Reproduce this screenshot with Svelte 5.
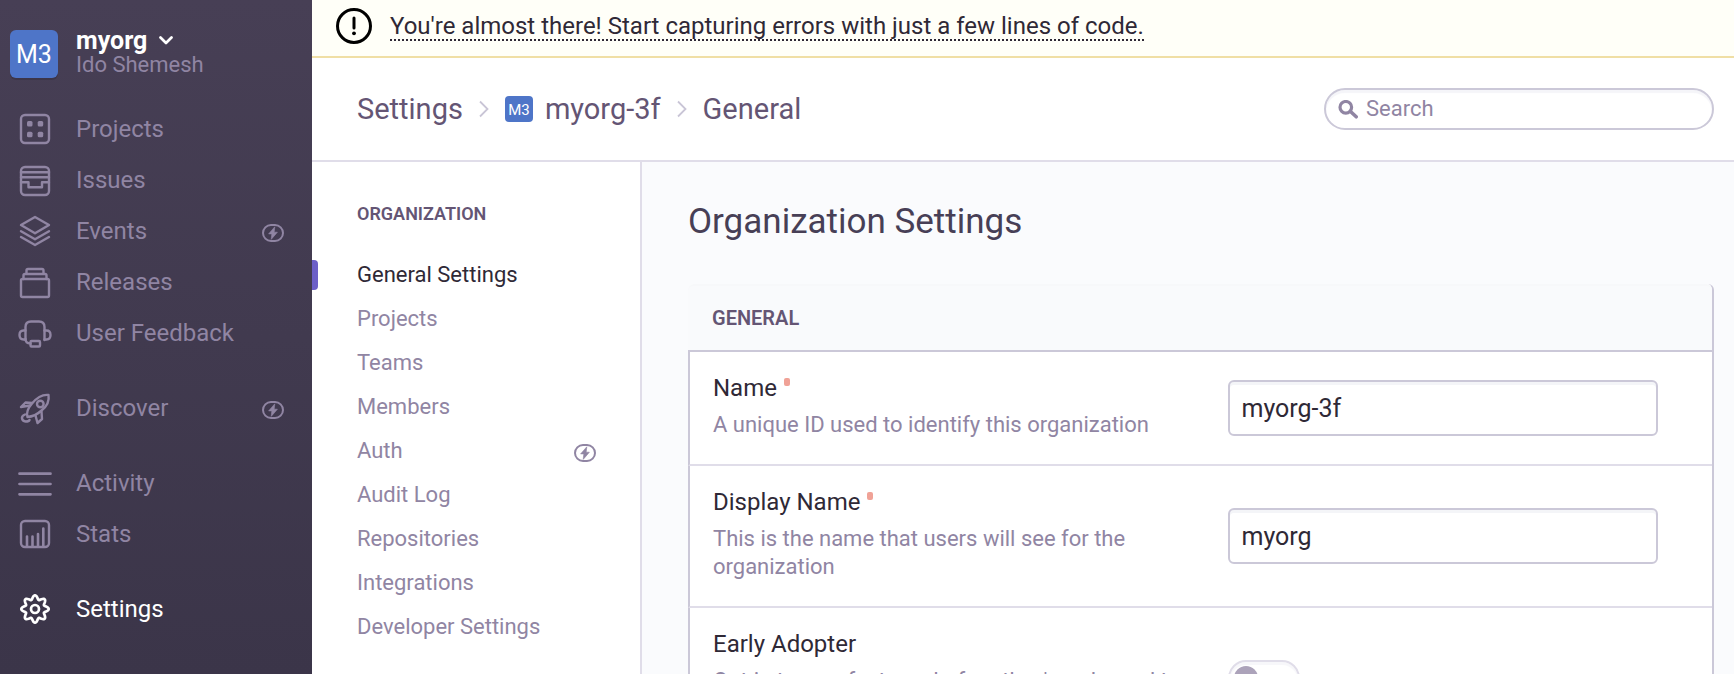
<script>
  const groups = [
    [
      { label: 'Projects', icon: 'projects' },
      { label: 'Issues', icon: 'issues' },
      { label: 'Events', icon: 'events', power: true },
      { label: 'Releases', icon: 'releases' },
      { label: 'User Feedback', icon: 'feedback' }
    ],
    [{ label: 'Discover', icon: 'discover', power: true }],
    [
      { label: 'Activity', icon: 'activity' },
      { label: 'Stats', icon: 'stats' }
    ],
    [{ label: 'Settings', icon: 'settings', active: true }]
  ];

  const links = [
    { label: 'General Settings', active: true },
    { label: 'Projects' },
    { label: 'Teams' },
    { label: 'Members' },
    { label: 'Auth', power: true },
    { label: 'Audit Log' },
    { label: 'Repositories' },
    { label: 'Integrations' },
    { label: 'Developer Settings' }
  ];

  // Outline of the eight-lobed gear, sampled around the centre of a 34px box.
  const gear =
    'M' +
    Array.from({ length: 128 }, (_, i) => {
      const a = (i / 128) * Math.PI * 2;
      const r = 11.7 + 2 * Math.cos(8 * a);
      return `${(17 + r * Math.cos(a)).toFixed(2)} ${(17 + r * Math.sin(a)).toFixed(2)}`;
    }).join('L') +
    'Z';

  let name = $state('myorg-3f');
  let displayName = $state('myorg');
  let earlyAdopter = $state(false);
</script>

{#snippet bolt()}
  <svg class="bolt" viewBox="0 0 22 18" aria-hidden="true">
    <rect x="1" y="1" width="20" height="16" rx="8" fill="none" stroke="currentColor" stroke-width="2" />
    <path d="M12.800 2.800 6.600 9.900h3.200L9.200 15.400l6.200-7.200h-3.200z" fill="currentColor" stroke="currentColor" stroke-width=".6" />
  </svg>
{/snippet}

{#snippet chevron()}
  <svg class="chevron" viewBox="0 0 10 18" aria-hidden="true">
    <path d="M1 1.500 8.500 9 1 16.500" fill="none" stroke="currentColor" stroke-width="1.800" />
  </svg>
{/snippet}

<div class="app">
  <aside class="sidebar">
    <button class="org" type="button">
      <span class="avatar">M3</span>
      <span class="who">
        <span class="org-name">
          myorg
          <svg class="caret" viewBox="0 0 14 9" aria-hidden="true">
            <path d="M1.500 1.500 7 7l5.500-5.500" fill="none" stroke="currentColor" stroke-width="2.700" stroke-linecap="round" stroke-linejoin="round" />
          </svg>
        </span>
        <span class="user">Ido Shemesh</span>
      </span>
    </button>

    <nav aria-label="Main">
      {#each groups as group}
        <ul>
          {#each group as item}
            <li>
              <a href="#{item.icon}" class="item" class:active={item.active}>
                <svg class="icon" viewBox="0 0 34 34" fill="none" stroke="currentColor" stroke-width="2.400" stroke-linejoin="round" stroke-linecap="round" aria-hidden="true">
                  {#if item.icon === 'projects'}
                    <rect x="3" y="3" width="28" height="28" rx="4" />
                    <g fill="currentColor" stroke="none">
                      <rect x="9" y="9" width="5.500" height="5.500" rx="1.500" />
                      <rect x="19.700" y="9" width="5.500" height="5.500" rx="1.500" />
                      <rect x="9" y="19.700" width="5.500" height="5.500" rx="1.500" />
                      <rect x="19.700" y="19.700" width="5.500" height="5.500" rx="1.500" />
                    </g>
                  {:else if item.icon === 'issues'}
                    <rect x="3" y="4" width="28" height="28" rx="4" />
                    <path d="M3 9.300h28M3 14.300h28M3 19.300h7.500v5h13.500v-5H31" />
                  {:else if item.icon === 'events'}
                    <path d="M17 3 31 11 17 19.300 3 11Z" />
                    <path d="M3 17.200 17 25.200l14-8M3 23 17 31l14-8" />
                  {:else if item.icon === 'releases'}
                    <rect x="3" y="14" width="28" height="18" rx="1.500" />
                    <path d="M5.500 14v-3.500q0-1.500 1.500-1.500h20q1.500 0 1.500 1.500V14M8.500 9V5.500Q8.500 4 10 4h14q1.500 0 1.500 1.500V9" />
                  {:else if item.icon === 'feedback'}
                    <path d="M7.500 24V11q0-5.500 5.500-5.500h8q5.500 0 5.500 5.500v13" />
                    <path d="M7.500 14.500H5.500q-4 0-4 4.500t4 4.500h2M26.500 14.500h2q4 0 4 4.500t-4 4.500h-2M7.500 23q0 4.500 5 4.500" />
                    <rect x="12.500" y="25" width="9.500" height="5.500" rx="1" />
                  {:else if item.icon === 'discover'}
                    <path d="M9.500 26Q7.500 20 14 12.500 22 3 30.500 4q1.500 9-7 15.500Q17 25.500 9.500 26Z" />
                    <circle cx="22.300" cy="13" r="3.300" />
                    <path d="M12 14.500 3 16l4.500-4.500 6.500.5M17.500 24.500 19.500 32l4.500-4-.5-7.500M7 23.500q-3.500 1.500-3 4t3.500 3q3.500 0 4-1.500" />
                  {:else if item.icon === 'activity'}
                    <path d="M1.500 7.700h31M1.500 18h31M1.500 28.300h31" stroke-width="2.700" />
                  {:else if item.icon === 'stats'}
                    <rect x="3" y="4" width="28" height="26" rx="4" />
                    <path d="M9 29V19.500M14.500 29V19.500M20 29V17M25.300 29V11.500" stroke-width="2.600" />
                  {:else}
                    <path d={gear} stroke-width="2.700" />
                    <circle cx="17" cy="17" r="4" stroke-width="2.700" />
                  {/if}
                </svg>
                <span class="label">{item.label}</span>
                {#if item.power}{@render bolt()}{/if}
              </a>
            </li>
          {/each}
        </ul>
      {/each}
    </nav>
  </aside>

  <div class="page">
    <div class="banner">
      <svg class="alert" viewBox="0 0 36 36" aria-hidden="true">
        <circle cx="18" cy="18" r="16.500" fill="none" stroke="#000" stroke-width="3" />
        <path d="M18 10v10" stroke="#000" stroke-width="3" stroke-linecap="round" />
        <circle cx="18" cy="25.300" r="1.900" />
      </svg>
      <a href="#start">You're almost there! Start capturing errors with just a few lines of code.</a>
    </div>

    <header class="topbar">
      <nav class="crumbs" aria-label="Breadcrumb">
        <a href="#settings">Settings</a>
        {@render chevron()}
        <a class="crumb-org" href="#org"><span class="avatar small">M3</span>myorg-3f</a>
        {@render chevron()}
        <a href="#general">General</a>
      </nav>
      <label class="search">
        <svg viewBox="0 0 20 19" aria-hidden="true">
          <circle cx="7.800" cy="7.300" r="5.800" fill="none" stroke="currentColor" stroke-width="3.200" />
          <path d="m12.500 11.500 5.700 5.300" stroke="currentColor" stroke-width="3.600" stroke-linecap="round" />
        </svg>
        <input type="search" placeholder="Search" aria-label="Search" />
      </label>
    </header>

    <div class="body">
      <nav class="subnav" aria-labelledby="subnav-title">
        <h2 id="subnav-title">ORGANIZATION</h2>
        <ul>
          {#each links as link}
            <li class:active={link.active}>
              <a href="#{link.label}">{link.label}</a>
              {#if link.power}{@render bolt()}{/if}
            </li>
          {/each}
        </ul>
      </nav>

      <main>
        <h1>Organization Settings</h1>
        <section class="panel">
          <h2>GENERAL</h2>
          <div class="row">
            <div class="desc">
              <label for="name">Name<span class="required"></span></label>
              <p>A unique ID used to identify this organization</p>
            </div>
            <input id="name" type="text" bind:value={name} />
          </div>
          <div class="row">
            <div class="desc">
              <label for="display-name">Display Name<span class="required"></span></label>
              <p>This is the name that users will see for the organization</p>
            </div>
            <input id="display-name" type="text" bind:value={displayName} />
          </div>
          <div class="row">
            <div class="desc">
              <label for="early">Early Adopter</label>
              <p>Opt-in to new features before they're released to the public</p>
            </div>
            <input id="early" class="toggle" type="checkbox" role="switch" aria-checked={earlyAdopter} bind:checked={earlyAdopter} />
          </div>
        </section>
      </main>
    </div>
  </div>
</div>

<style>
  :global(body) {
    background: #fff;
  }

  .app,
  .app * {
    box-sizing: border-box;
  }

  .app {
    display: flex;
    height: 100vh;
    overflow: hidden;
    font-family: Roboto, 'Liberation Sans', sans-serif;
    font-size: 22px;
    line-height: 28px;
    color: #2f2936;
  }

  a {
    color: inherit;
    text-decoration: none;
  }

  ul {
    list-style: none;
    margin: 0;
    padding: 0;
  }

  h1,
  h2,
  p {
    margin: 0;
  }

  svg {
    display: block;
    flex: none;
  }

  input,
  button {
    font: inherit;
    color: inherit;
  }

  .sidebar {
    flex: 0 0 312px;
    padding: 30px 28px 0 0;
    background: linear-gradient(#473f55, #3b3549);
    color: #9085a3;
  }

  .org {
    display: flex;
    gap: 18px;
    margin: 0 0 26px;
    padding: 0 0 0 10px;
    border: 0;
    background: none;
    text-align: left;
  }

  .avatar {
    display: flex;
    align-items: center;
    justify-content: center;
    width: 48px;
    height: 48px;
    padding-top: 1px;
    border-radius: 6px;
    background: #4e75c8;
    box-shadow: 0 2px 0 rgba(0, 0, 0, 0.12);
    color: #fff;
    font-size: 25px;
  }

  .who {
    display: flex;
    flex-direction: column;
    height: 48px;
  }

  .org-name {
    display: flex;
    align-items: center;
    gap: 12px;
    height: 21px;
    color: #fff;
    font-size: 25px;
    font-weight: 700;
  }

  .caret {
    width: 14px;
    height: 9px;
  }

  .user {
    line-height: 28px;
  }

  .sidebar ul {
    margin-bottom: 24px;
  }

  .item {
    display: flex;
    align-items: center;
    gap: 24px;
    padding: 8px 0 9px 18px;
    font-size: 24px;
  }

  .label {
    flex: 1;
  }

  .item.active {
    color: #fff;
  }

  .icon {
    width: 34px;
    height: 34px;
  }

  .bolt {
    width: 22px;
    height: 18px;
    margin-top: 4px;
  }

  .page {
    flex: 1;
    min-width: 0;
    display: flex;
    flex-direction: column;
  }

  .banner {
    display: flex;
    align-items: center;
    gap: 18px;
    padding: 8px 24px 12px;
    border-bottom: 2px solid #f0dfa5;
    background: #fffff8;
  }

  .banner a {
    margin-top: 2px;
    border-bottom: 2px dotted #2f2936;
    font-size: 24px;
    line-height: 26px;
  }

  .alert {
    width: 36px;
    height: 36px;
  }

  .topbar {
    display: flex;
    align-items: center;
    justify-content: space-between;
    padding: 30px 20px 30px 45px;
    border-bottom: 2px solid #e0dde9;
    background: #fff;
  }

  .crumbs {
    display: flex;
    align-items: center;
    gap: 16px;
    color: #645574;
    font-size: 29px;
    line-height: 32px;
  }

  .chevron {
    width: 10px;
    height: 18px;
    color: #c9c5d6;
  }

  .crumb-org {
    display: flex;
    align-items: center;
    gap: 12px;
  }

  .avatar.small {
    width: 28px;
    height: 26px;
    border-radius: 4px;
    box-shadow: none;
    font-size: 15px;
  }

  .search {
    display: flex;
    align-items: center;
    gap: 8px;
    flex: 0 1 390px;
    height: 42px;
    padding: 0 12px;
    border: 2px solid #cbc8d8;
    border-radius: 21px;
    box-shadow: inset 0 3px 1px #f5f5f9;
    color: #9085a3;
  }

  .search svg {
    width: 20px;
    height: 19px;
  }

  .search input {
    flex: 1;
    min-width: 0;
    padding: 0;
    border: 0;
    outline: 0;
    background: none;
  }

  .search input::placeholder {
    color: #9085a3;
    opacity: 1;
  }

  .body {
    flex: 1;
    min-height: 0;
    display: flex;
  }

  .subnav {
    flex: 0 0 330px;
    padding-top: 38px;
    border-right: 2px solid #e0dde9;
    background: #fff;
    color: #9085a3;
  }

  h2 {
    color: #645574;
    font-size: 20px;
    font-weight: 600;
    line-height: 28px;
  }

  .subnav h2 {
    padding: 0 45px;
    margin-bottom: 24px;
    font-size: 18px;
  }

  .subnav li {
    position: relative;
    display: flex;
    align-items: center;
    justify-content: space-between;
    height: 44px;
    padding: 1px 44px 0 45px;
  }

  .subnav li.active {
    color: #2f2936;
  }

  .subnav li.active::before {
    content: '';
    position: absolute;
    left: 0;
    top: 8px;
    width: 6px;
    height: 30px;
    border-radius: 0 4px 4px 0;
    background: #6c5fc7;
  }

  main {
    flex: 1;
    min-width: 0;
    overflow: hidden;
    padding: 40px 20px 0 46px;
    background: #fafbfd;
  }

  h1 {
    margin-bottom: 42px;
    color: #473f56;
    font-size: 35px;
    font-weight: 400;
    line-height: 40px;
  }

  .panel {
    border-right: 2px solid #cbc8d8;
    border-radius: 6px;
    background: #fff;
  }

  .panel h2 {
    padding: 18px 24px;
    border-top: 2px solid #f7f8fa;
    border-bottom: 2px solid #cbc8d8;
    border-radius: 6px 6px 0 0;
    background: #f9fafc;
  }

  .row {
    display: grid;
    grid-template-columns: 6fr 5fr;
    align-items: center;
    padding: 22px 54px 22px 23px;
    border-left: 2px solid #cbc8d8;
    border-bottom: 2px solid #e0dde9;
  }

  .desc {
    padding: 0 40px 3px 0;
  }

  .desc label {
    display: flex;
    gap: 7px;
    margin-bottom: 9px;
    font-size: 24px;
    line-height: 28px;
  }

  .required {
    width: 6px;
    height: 8px;
    margin-top: 4px;
    border-radius: 2px;
    background: #f0a297;
  }

  .desc p {
    color: #9085a3;
  }

  .row input[type='text'] {
    width: 100%;
    height: 56px;
    padding: 0 11px;
    border: 2px solid #cbc8d8;
    border-radius: 6px;
    box-shadow: inset 0 3px 0 #f4f5f8;
    background: #fff;
    font-size: 25px;
  }

  .toggle {
    appearance: none;
    display: flex;
    align-items: center;
    width: 72px;
    height: 36px;
    margin: 0;
    padding: 0 4px;
    border: 2px solid #e0dde9;
    border-radius: 18px;
    box-shadow: inset 0 3px 1px #f7f7fa;
    background: #fff;
  }

  .toggle::before {
    content: '';
    width: 24px;
    height: 24px;
    border-radius: 50%;
    background: #aca3ba;
  }

  .toggle:checked::before {
    margin-left: auto;
    background: #6c5fc7;
  }
</style>
